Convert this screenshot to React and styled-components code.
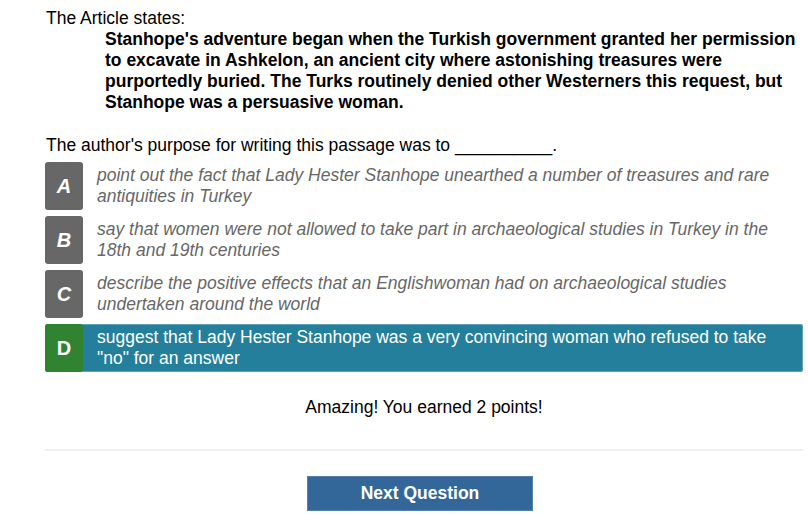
import React from "react";
import styled, { createGlobalStyle } from "styled-components";

const Global = createGlobalStyle`
  html, body { margin: 0; padding: 0; background: #fff; }
  body { font-family: "Liberation Sans", Arial, sans-serif; font-size: 17.5px; color: #000; }
`;

const Page = styled.div`
  width: 758px;
  padding: 8px 0 0 45px;
  line-height: 21px;
`;

const Intro = styled.div`
  padding-left: 1px;
`;

const Quote = styled.div`
  font-weight: bold;
  padding-left: 60px;
`;

const Prompt = styled.div`
  margin-top: 22px;
  padding-left: 1px;
`;

const Options = styled.div`
  margin-top: 6px;
  display: flex;
  flex-direction: column;
  gap: 6px;
`;

const Option = styled.div`
  display: flex;
  align-items: stretch;
  min-height: 48px;
  border-radius: 3px;
  background: ${(p) => (p.$selected ? "#237f9b" : "transparent")};
  box-shadow: ${(p) => (p.$selected ? "inset 0 0 0 1px #5aa3b8" : "none")};
`;

const Letter = styled.div`
  flex: 0 0 38px;
  display: flex;
  align-items: center;
  justify-content: center;
  border-radius: 3px;
  background: ${(p) => (p.$correct ? "#2f8331" : "#676767")};
  color: #fff;
  font-weight: bold;
  font-style: ${(p) => (p.$correct ? "normal" : "italic")};
  font-size: 20px;
`;

const OptionText = styled.div`
  display: flex;
  align-items: center;
  padding-left: 14px;
  padding-right: 30px;
  font-style: ${(p) => (p.$selected ? "normal" : "italic")};
  color: ${(p) => (p.$selected ? "#fff" : "#676767")};
`;

const Feedback = styled.div`
  margin-top: 25px;
  text-align: center;
`;

const Divider = styled.hr`
  margin: 31px 0 0;
  border: 0;
  height: 2px;
  background: #f0f0f0;
`;

const Footer = styled.div`
  display: flex;
  justify-content: center;
  padding: 25px 0 0;
`;

const NextButton = styled.button`
  width: 226px;
  height: 35px;
  margin-right: 8px;
  border: 1px solid #5582ad;
  background: #346799;
  color: #fff;
  font-family: "Liberation Sans", Arial, sans-serif;
  font-size: 17.5px;
  font-weight: bold;
  cursor: pointer;
`;

const options = [
  { key: "A", text: "point out the fact that Lady Hester Stanhope unearthed a number of treasures and rare antiquities in Turkey" },
  { key: "B", text: "say that women were not allowed to take part in archaeological studies in Turkey in the 18th and 19th centuries" },
  { key: "C", text: "describe the positive effects that an Englishwoman had on archaeological studies undertaken around the world" },
  { key: "D", text: "suggest that Lady Hester Stanhope was a very convincing woman who refused to take \"no\" for an answer", selected: true },
];

export default function App() {
  return (
    <>
      <Global />
      <Page>
        <Intro>The Article states:</Intro>
        <Quote>
          Stanhope's adventure began when the Turkish government granted her permission to excavate in Ashkelon, an ancient city where astonishing treasures were purportedly buried. The Turks routinely denied other Westerners this request, but Stanhope was a persuasive woman.
        </Quote>
        <Prompt>The author's purpose for writing this passage was to __________.</Prompt>
        <Options>
          {options.map((o) => (
            <Option key={o.key} $selected={o.selected}>
              <Letter $correct={o.selected}>{o.key}</Letter>
              <OptionText $selected={o.selected}>{o.text}</OptionText>
            </Option>
          ))}
        </Options>
        <Feedback>Amazing! You earned 2 points!</Feedback>
        <Divider />
        <Footer>
          <NextButton>Next Question</NextButton>
        </Footer>
      </Page>
    </>
  );
}
